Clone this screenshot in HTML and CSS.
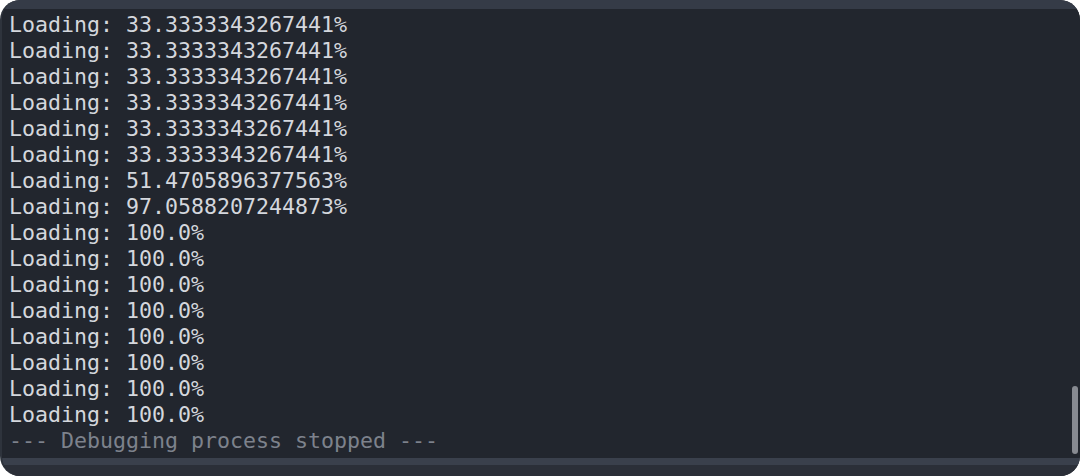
FILE: index.html
```html
<!DOCTYPE html>
<html>
<head>
<meta charset="utf-8">
<link rel="stylesheet" href="styles.css">
</head>
<body>
<div class="window">
  <div class="topbar"></div>
  <div class="console">
    <div class="output">
      <div class="line">Loading: 33.3333343267441%</div>
      <div class="line">Loading: 33.3333343267441%</div>
      <div class="line">Loading: 33.3333343267441%</div>
      <div class="line">Loading: 33.3333343267441%</div>
      <div class="line">Loading: 33.3333343267441%</div>
      <div class="line">Loading: 33.3333343267441%</div>
      <div class="line">Loading: 51.4705896377563%</div>
      <div class="line">Loading: 97.0588207244873%</div>
      <div class="line">Loading: 100.0%</div>
      <div class="line">Loading: 100.0%</div>
      <div class="line">Loading: 100.0%</div>
      <div class="line">Loading: 100.0%</div>
      <div class="line">Loading: 100.0%</div>
      <div class="line">Loading: 100.0%</div>
      <div class="line">Loading: 100.0%</div>
      <div class="line">Loading: 100.0%</div>
      <div class="line muted">--- Debugging process stopped ---</div>
    </div>
    <div class="scrolltrack"><div class="thumb"></div></div>
  </div>
  <div class="bottomband"></div>
  <div class="bottombar"></div>
</div>
</body>
</html>
```

FILE: styles.css
```css
html, body {
  margin: 0;
  padding: 0;
  background: #ffffff;
}
.window {
  width: 1080px;
  height: 476px;
  border-radius: 20px;
  overflow: hidden;
  background: #22262e;
  display: flex;
  flex-direction: column;
  border-left: 2px solid #2e333c;
  box-sizing: border-box;
}
.topbar {
  height: 9px;
  background: #353b47;
  flex: none;
}
.console {
  flex: 1;
  display: flex;
  background: #22262e;
  min-height: 0;
  overflow: hidden;
}
.output {
  flex: 1;
  padding: 3px 0 0 7px;
  font-family: "DejaVu Sans Mono", monospace;
  font-size: 21.6px;
  line-height: 26px;
  color: #d4d7dd;
}
.line {
  white-space: pre;
  height: 26px;
}
.muted {
  color: #7d828c;
}
.scrolltrack {
  width: 10px;
  display: flex;
  flex-direction: column;
  justify-content: flex-end;
  padding-bottom: 4px;
}
.thumb {
  width: 6px;
  height: 68px;
  margin-left: 2px;
  border-radius: 3px;
  background: #878a91;
}
.bottomband {
  height: 7px;
  background: #3a404c;
  flex: none;
}
.bottombar {
  height: 11px;
  background: #2b2f38;
  flex: none;
}
```
